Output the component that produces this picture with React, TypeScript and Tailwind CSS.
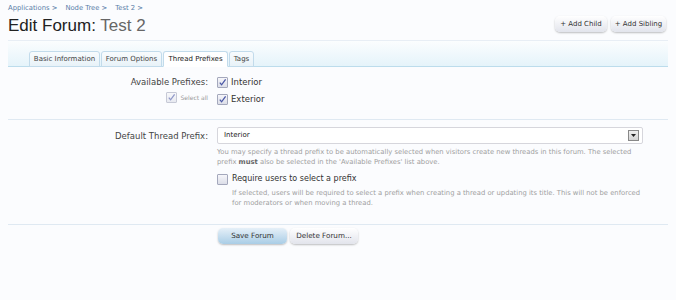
import { useState } from "react"

const font = "font-['DejaVu_Sans',Tahoma,sans-serif]"

function Check({ checked, onChange, faded }: { checked: boolean; onChange: () => void; faded?: boolean }) {
  return (
    <span
      onClick={onChange}
      className={
        "inline-flex h-[11px] w-[11px] shrink-0 cursor-pointer items-center justify-center rounded-[1px] border border-[#a4a8bc] bg-gradient-to-b from-[#f6f6fa] to-[#dcdee8] " +
        (faded ? "opacity-60" : "")
      }
    >
      {checked && (
        <svg width="9" height="9" viewBox="0 0 9 9">
          <path d="M1.8 4.6 L3.6 6.8 L7.6 1.4" fill="none" stroke="#4a58a6" strokeWidth="1.3" />
        </svg>
      )}
    </span>
  )
}

export default function App() {

  const [interior, setInterior] = useState(true)
  const [exterior, setExterior] = useState(true)
  const [required, setRequired] = useState(false)

  const tabs = [
    { name: "Basic Information", w: "w-[71px]" },
    { name: "Forum Options", w: "w-[61px]" },
    { name: "Thread Prefixes", w: "w-[65px]" },
    { name: "Tags", w: "w-[25px]" },
  ]
  const [tab, setTab] = useState("Thread Prefixes")

  return (
    <div className={"h-[300px] w-[676px] bg-[#fbfcfe] text-[#333] " + font}>

      <div className="px-[8px] pt-[3px]">

        <div className="flex gap-[8px] text-[6.8px] leading-[10px] text-[#5a7ea8]">
          <span>Applications &gt;</span>
          <span>Node Tree &gt;</span>
          <span>Test 2 &gt;</span>
        </div>

        <div className="flex h-[26px] items-start justify-between pr-[2px]">
          <h1 className="font-['Liberation_Sans',Arial,sans-serif] text-[17px] leading-[26px] text-[#222]">
            Edit Forum: <span className="text-[#666]">Test 2</span>
          </h1>
          <div className="flex gap-[4px] pt-[3px]">
            <button className="h-[16px] w-[52px] rounded-[5px] bg-gradient-to-b from-white to-[#e2e4ec] text-[7px] text-[#333] shadow-[0_1px_2px_rgba(0,0,0,0.25)]">
              + Add Child
            </button>
            <button className="h-[16px] w-[55px] rounded-[5px] bg-gradient-to-b from-white to-[#e2e4ec] text-[7px] text-[#333] shadow-[0_1px_2px_rgba(0,0,0,0.25)]">
              + Add Sibling
            </button>
          </div>
        </div>

        <div className="mt-[1px] border-t border-[#e8eef5] bg-gradient-to-b from-[#fbfdfe] to-[#e4f3fa] pt-[10px]">
          <div className="flex border-b border-[#bcdcec] pl-[21px]">
            {tabs.map(t => (
              <button
                key={t.name}
                onClick={() => setTab(t.name)}
                className={
                  "-mb-px mr-px h-[16px] rounded-t-[3px] border border-[#c2dbeb] text-[7px] leading-[14px] " + t.w + " " +
                  (tab === t.name
                    ? "border-b-white bg-white text-[#222]"
                    : "bg-gradient-to-b from-[#f8fbfd] to-[#e8f2f8] text-[#444]")
                }
              >
                {t.name}
              </button>
            ))}
          </div>
        </div>

        <div>

          <div className="flex border-b border-[#dfe9f2] pb-[13px] pt-[8px]">
            <div className="flex w-[209px] flex-col items-end pr-[9px]">
              <span className="text-[8.5px] leading-[14px] text-[#444]">Available Prefixes:</span>
              <label className="mt-[3px] flex items-center gap-[4px]">
                <Check checked={interior && exterior} faded onChange={() => { const v = !(interior && exterior); setInterior(v); setExterior(v) }} />
                <span className="text-[6px] text-[#999]">Select all</span>
              </label>
            </div>
            <div className="flex flex-col gap-[3px]">
              <label className="flex items-center gap-[3px] text-[8.5px] leading-[14px]">
                <Check checked={interior} onChange={() => setInterior(!interior)} />
                Interior
              </label>
              <label className="flex items-center gap-[3px] text-[8.5px] leading-[14px]">
                <Check checked={exterior} onChange={() => setExterior(!exterior)} />
                Exterior
              </label>
            </div>
          </div>

          <div className="flex border-b border-[#dfe9f2] pb-[16px] pt-[7px]">
            <div className="w-[209px] pr-[9px] pt-[2px] text-right text-[8.5px] leading-[14px] text-[#444]">
              Default Thread Prefix:
            </div>
            <div className="w-[426px]">
              <div className="flex h-[17px] items-center justify-between rounded-[2px] border border-[#d6d6dc] bg-white pl-[6px] pr-[3px] text-[7px] text-[#222]">
                <span>Interior</span>
                <span className="flex h-[11px] w-[11px] items-center justify-center border border-[#888] bg-gradient-to-b from-[#f0f0f0] to-[#d4d4d4]">
                  <svg width="5" height="3" viewBox="0 0 5 3"><path d="M0 0 H5 L2.5 3 Z" fill="#222" /></svg>
                </span>
              </div>
              <div className="mt-[3px] text-[6.8px] leading-[10px] text-[#a0a0a0]">
                <p className="whitespace-nowrap">You may specify a thread prefix to be automatically selected when visitors create new threads in this forum. The selected</p>
                <p>prefix <strong className="font-bold text-[#666]">must</strong> also be selected in the 'Available Prefixes' list above.</p>
              </div>

              <label className="mt-[5px] flex items-center gap-[4px] text-[8px] leading-[14px] text-[#333]">
                <Check checked={required} onChange={() => setRequired(!required)} />
                Require users to select a prefix
              </label>
              <p className="mt-[2px] pl-[15px] text-[6.8px] leading-[10px] text-[#a0a0a0]">
                If selected, users will be required to select a prefix when creating a thread or updating its title. This will not be enforced for moderators or when moving a thread.
              </p>
            </div>
          </div>

          <div className="flex gap-[3px] pl-[210px] pt-[3px]">
            <button className="h-[16px] w-[69px] rounded-[5px] bg-gradient-to-b from-[#e6f0f8] to-[#a9cde6] text-[7.2px] text-[#333] shadow-[0_1px_2px_rgba(0,0,0,0.25)]">
              Save Forum
            </button>
            <button className="h-[16px] w-[68px] rounded-[5px] bg-gradient-to-b from-white to-[#e2e4ec] text-[7.2px] text-[#333] shadow-[0_1px_2px_rgba(0,0,0,0.25)]">
              Delete Forum...
            </button>
          </div>

        </div>
      </div>
    </div>
  )
}
